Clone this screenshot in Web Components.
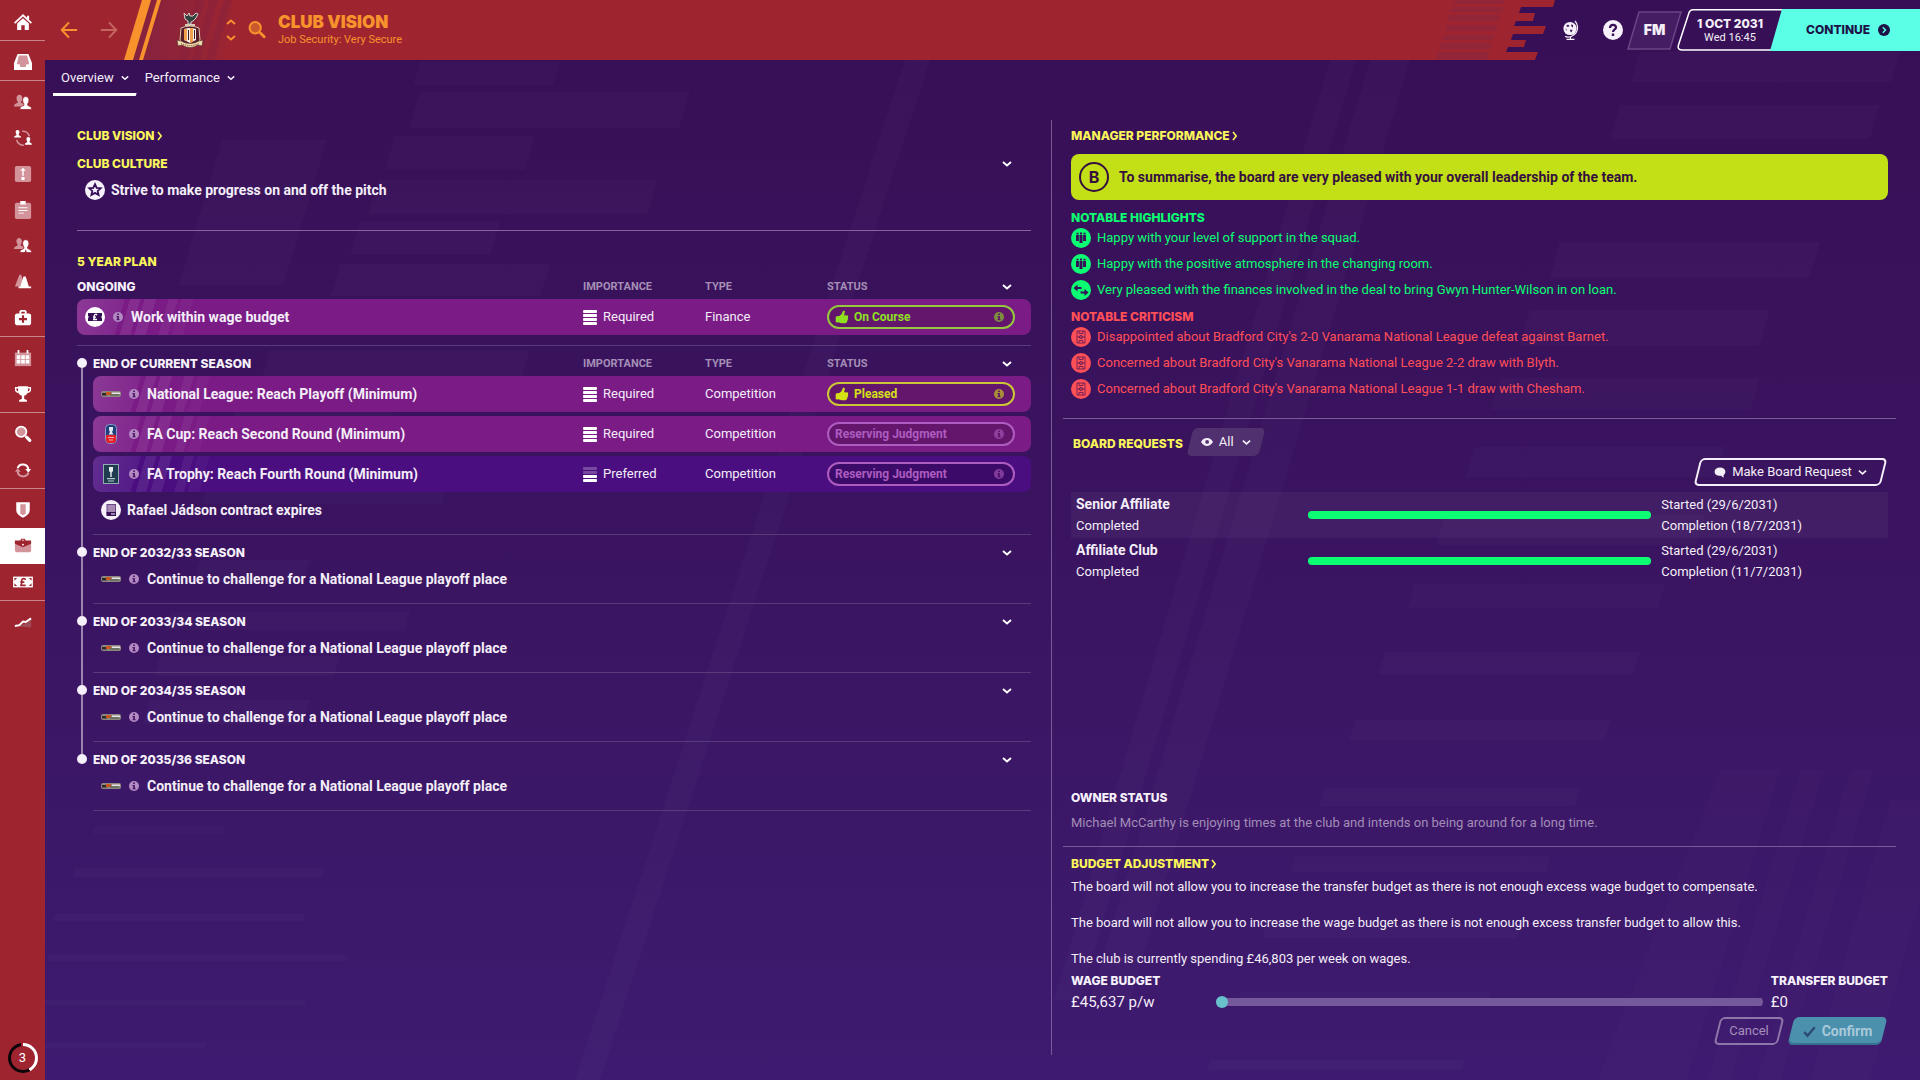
<!DOCTYPE html>
<html lang="en">
<head>
<meta charset="utf-8">
<title>Club Vision</title>
<style>
  html, body { height: 100%; margin: 0; }
  body {
    font: 13px/18px Roboto, "Liberation Sans", sans-serif;
    color: #f4eef8;
    background: #370f57;
    --head: Inter, "Liberation Sans", sans-serif;
    --yellow: #fbf659;
    --red: #9e2530;
    --amber: #f7922c;
    --good: #0cff72;
    --bad: #ff4f57;
    --cyan: #5affe6;
  }
</style>
</head>
<body>
<club-app></club-app>

<script>
const person = (x, y, s, fill, extra = '') =>
  `<path transform="translate(${x} ${y}) scale(${s})" fill="${fill}" ${extra} d="M6 0c2 0 3.200 1.500 3.200 3.700 0 1.600-.6 2.900-1.300 3.600v1.500c1 .8 4.100 1 4.100 4.200H0c0-3.200 3.100-3.400 4.100-4.200V7.300C3.400 6.600 2.800 5.300 2.800 3.700 2.800 1.500 4 0 6 0z"/>`;

const PALE = '#d3939a';

const ICONS = {
  home: `<path fill="#fff" d="M10 1 0 10.500l1.400 1.500L10 4l8.600 8 1.400-1.500-3.200-3V3h-2.300v2.300z"/><path fill="#fff" d="M10 5.800l6.500 6V19h-4.600v-5.500H8.100V19H3.500v-7.200z"/>`,
  inbox: `<path fill="#fff" d="M4 1h12l4 10v8H0v-8z"/><path fill="${PALE}" d="M5.400 2.800h9.200l2.400 9.700h-3.200L13 15.500H7l-.8-3H3z"/>`,
  squad: person(0, 2, 1, PALE) + person(6.5, 4, 1.100, '#fff', `stroke="#9e2530" stroke-width=".8"`),
  swap: person(0, 1, .66, '#fff') + person(12, 9, .66, '#fff') + `<path fill="none" stroke="${PALE}" stroke-width="1.800" d="M9 2.500a7.500 7.500 0 0 1 8 5.500M11 18a7.500 7.500 0 0 1-8-6"/>`,
  board: `<rect x="1" y="1" width="18" height="18" rx="2" fill="${PALE}"/><path fill="#fff" d="M10 3l3 3.500h-2.200V12H9.200V6.500H7z"/><circle cx="10" cy="15" r="2" fill="#fff"/>`,
  clip: `<rect x="1" y="2" width="18" height="18" rx="2" fill="${PALE}"/><path fill="#fff" d="M7 0h6v4H7zM5 7h10v1H5zM5 10h10v1H5zM5 13h6v1H5z"/>`,
  staff: person(0, 1, .95, PALE) + person(6.5, 3, 1.100, '#fff', `stroke="#9e2530" stroke-width=".8"`) + `<path fill="#9e2530" d="M13 13.500l-1.200 4h2.600z"/>`,
  cones: `<path fill="${PALE}" d="M6 2h2l4 13H1z"/><path fill="#fff" d="M10.500 4h2.500l3.500 11H19v2H5v-2h2z"/>`,
  medic: `<path fill="#fff" fill-rule="evenodd" d="M6 5V2.500L7.500 1h5L14 2.500V5h3L19 6.500v10L17.500 18h-15L1 16.500v-10L3 5zm2 0h4V3H8zm.8 2v3H5.600v2.400h3.200v3h2.400v-3h3.200V10h-3.200V7z"/>`,
  calendar: `<path fill="${PALE}" d="M1 4h18v15H1z"/><path fill="#fff" d="M4 1h2v4H4zM14 1h2v4h-2zM3 7h4v4H3zM8 7h4v4H8zM13 7h4v4h-4zM3 12h4v4H3zM8 12h4v4H8zM13 12h4v4h-4z"/>`,
  trophy: `<path fill="#fff" d="M4.500 1.500h11v5c0 3.500-2.200 5.100-4.200 5.500v3.500l3 1.300V18.500H5.700v-1.700l3-1.300V12C6.700 11.600 4.500 10 4.500 6.500z"/><path fill="none" stroke="#fff" stroke-width="1.500" d="M5 3H1.800v2c0 2 1.500 3 3.700 3M15 3h3.200v2c0 2-1.500 3-3.700 3"/>`,
  search: `<circle cx="8" cy="7.500" r="5.800" fill="${PALE}" stroke="#fff" stroke-width="2"/><path stroke="#fff" stroke-width="3.600" stroke-linecap="round" d="M14 13.500l3.500 3.500"/>`,
  cycle: `<path fill="none" stroke="#fff" stroke-width="2.200" d="M4 8a6.200 6.200 0 0 1 12 1.500"/><path fill="#fff" d="M12.500 9H19l-3 4z"/><path fill="none" stroke="${PALE}" stroke-width="2.200" d="M16 13A6.200 6.200 0 0 1 4 11.500"/><path fill="${PALE}" d="M7.500 12H1l3-4z"/>`,
  shield: `<path fill="#fff" d="M2.500 1.500h15v8.500c0 3.800-3.200 6.500-7.500 8.500-4.300-2-7.500-4.700-7.500-8.500z"/><path fill="${PALE}" d="M7 3.500h6v10c-.8.9-1.900 1.700-3 2.200-1.100-.5-2.200-1.300-3-2.200z"/>`,
  briefcase: `<path fill="${PALE}" d="M1 6h18v9.500L17.500 17h-15L1 15.500z"/><path fill="#9e2530" d="M1 4h6l1-2h4l1 2h6v3.500l-9 4-9-4zM8.500 4h3l-.5-1H9z"/><circle cx="10" cy="8.500" r="1" fill="#fff"/>`,
  money: `<path fill="#fff" d="M-1 4h22v12H-1z"/><path fill="#9e2530" d="M.5 5.500h3l-3 3zM19.500 5.500h-3l3 3zM.5 14.500h3l-3-3zM19.500 14.500h-3l3-3z"/><path fill="none" stroke="#9e2530" stroke-width="1.900" d="M12.800 7.500C12 5.500 8.500 5.800 8.500 8.500V11c0 1.500-.6 2.500-1.500 2.800h6M7 10.200h4.500"/>`,
  trend: `<path fill="#9f4a57" d="M5 15l8-4 6-3v8z"/><path fill="none" stroke="#fff" stroke-width="2.200" d="M1 14.500l5-1 4-4 3 .5 6-4"/>`,
  back: `<path fill="none" stroke="currentColor" stroke-width="2.300" d="M19 10H2M10 1.500L2 10l8 8.500"/>`,
  forward: `<path fill="none" stroke="currentColor" stroke-width="2.300" d="M1 10h17M10 1.500l8 8.500-8 8.500"/>`,
  up: `<path fill="none" stroke="currentColor" stroke-width="3.800" d="M2 14l8-7 8 7"/>`,
  down: `<path fill="none" stroke="currentColor" stroke-width="3.800" d="M2 6l8 7 8-7"/>`,
  right: `<path fill="none" stroke="currentColor" stroke-width="4" d="M5 0l8 10-8 10"/>`,
  find: `<circle cx="8" cy="7.500" r="6.300" fill="#c95a2d" stroke="currentColor" stroke-width="2.200"/><path stroke="currentColor" stroke-width="3.200" stroke-linecap="round" d="M14 13.500l4 4"/>`,
  star: `<circle cx="10" cy="10" r="10" fill="#f6f1fa"/><path fill="none" stroke="#370f57" stroke-width="1.800" d="M10 4.200l1.700 3.700 4 .4-3 2.700.9 4-3.600-2.100L6.400 15l.9-4-3-2.700 4-.4z"/>`,
  cash: `<circle cx="10" cy="10" r="10" fill="#fff"/><path fill="#370f57" d="M3 6h14v8H3z"/><path fill="#fff" d="M3 9v2l1-1zM17 9v2l-1-1z"/><path fill="none" stroke="#fff" stroke-width="1.300" d="M12 8.200C11.500 6.800 9.200 7 9.200 8.800v2c0 .9-.4 1.500-1.100 1.700H12M8 10.200h3"/>`,
  contract: `<circle cx="10" cy="10" r="10" fill="#f6f1fa"/><rect x="6" y="4.500" width="8.500" height="9" fill="#a78bb6" stroke="#6c4588"/><path fill="#370f57" d="M5.500 12H15v4H5.500z"/><path fill="#fff" d="M10 13.500h4v1h-4z"/>`,
  info: `<circle cx="10" cy="10" r="10" fill="currentColor"/><path fill="var(--hole, #4a1763)" d="M8.400 3h3.400v3H8.400zM7 8h4.800v6H13v2.400H7.200V14h1.200v-3.600H7z"/>`,
  thumb: `<path fill="currentColor" d="M1 9.500l3.500-.8V18L1 17.500zM5.500 9L9 6.500 11.500 1h2l.6 1.500L13 7.500l6 .2L18.500 10l.3 2.500-1 2.200-.5 2.300L15 19H9l-3.500-1.500z"/><path fill="currentColor" d="M3 9h5v8.500H3z"/>`,
  squadDot: `<circle cx="10" cy="10" r="10" fill="currentColor"/><path fill="#370f57" d="M5 7h2.900v6H5zM8.500 7h3v8h-3zM12.100 7H15v6h-2.900zM5.500 4.800h2v1.600h-2zM9 4.500h2v1.900H9zM12.500 4.800h2v1.600h-2z"/>`,
  arrowsDot: `<circle cx="10" cy="10" r="10" fill="currentColor"/><path fill="#370f57" d="M2.500 8l4-3.500V7h4v2h-4v2.500zM17.500 12.500l-4 3.500v-2.500h-4v-2h4V9z"/>`,
  pitchDot: `<circle cx="10" cy="10" r="10" fill="currentColor"/><path fill="none" stroke="#370f57" stroke-opacity=".65" d="M6 4h8v12H6zM6 10h8M8 4v2.500h4V4M8 16v-2.500h4V16"/><circle cx="10" cy="10" r="1.600" fill="none" stroke="#370f57" stroke-opacity=".65"/>`,
  eye: `<path fill="currentColor" fill-rule="evenodd" d="M0 10C3 5 6.500 3.500 10 3.500S17 5 20 10c-3 5-6.500 6.500-10 6.500S3 15 0 10zm7-.2a3.200 3.200 0 1 0 6.400 0A3.200 3.200 0 0 0 7 9.800z"/>`,
  bubble: `<path fill="currentColor" d="M10 2.500c5.500 0 9 2.800 9 7 0 2.200-1.300 4.200-3 5.500v4.500l-4.500-3.200C6 17 1 14 1 9.500c0-4.200 3.500-7 9-7z"/>`,
  tick: `<path fill="none" stroke="currentColor" stroke-width="3.600" d="M2 11l5 5.500L18 3.500"/>`,
  help: `<circle cx="10" cy="10" r="10" fill="#f6f1fa"/><path fill="none" stroke="#370f57" stroke-width="2.200" d="M7 8c0-4 6-4 6-.6 0 2-3 2-3 4.600"/><path fill="#370f57" d="M8.800 13.500h2.400V16H8.800z"/>`,
  globe: `<circle cx="9" cy="8.500" r="6.600" fill="#f6f1fa"/><path fill="#370f57" d="M5 6l2-1.500L8.500 6 7 7zM10 4.500l2 .5v2.500l-1.500-1zM9.500 9.500l2 .5-1.200 2.500-1.300-1.500zM4.500 8.500l1.200 1-.4 1.500z"/><path fill="none" stroke="#f6f1fa" stroke-width="1.200" d="M14 1a9.500 9.500 0 0 1-10 15.500M9.500 17v2M5.500 19.300h8"/>`,
  go: `<circle cx="10" cy="10" r="10" fill="#1d1147"/><path fill="none" stroke="#5affe6" stroke-width="2.400" d="M8 5.500l4.500 4.500L8 14.500"/>`,
  // competition logos
  league: `<rect x="0" y="7" width="20" height="6" rx="2" fill="#8d8781"/><path fill="#2f2a2e" d="M1 9h5v2.500H1z"/><path fill="#c9571f" d="M5 8h5v3H5z"/><path fill="#e6e2e4" d="M11 8.500h8v1.500h-8z"/><path fill="#4c5f45" d="M9 10.500h9v1H9z"/>`,
  facup: `<rect x="4.500" y=".5" width="11" height="19" rx="4" fill="#1d3f7c" stroke="#8b9cc4"/><path fill="#e5202a" d="M5 11h10v5q0 3-3 3H8q-3 0-3-3z"/><path fill="#dfe6f2" d="M8 3h4v3l-1 2 1.500 2.500h-5L9 8 8 6z"/><path fill="#f4a9a9" d="M7 13h6v1H7zM8 15.500h4v1H8z"/>`,
  fatrophy: `<rect x="2.500" y=".5" width="15" height="19" fill="#1f3c50" stroke="#93abb5"/><path fill="#e6edf0" d="M8 3h4v4l-1.300 1.500V13H9.300V8.500L8 7z"/><path fill="#b8c8cf" d="M6 14h8v1.200H6zM7 16.500h6v1H7z"/>`
};

class GameIcon extends HTMLElement {
  connectedCallback() {
    this.attachShadow({ mode: 'open' }).innerHTML = `
      <style>
        :host { display: inline-flex; flex: none; width: 20px; height: 20px; }
        svg { width: 100%; height: 100%; overflow: visible; }
      </style>
      <svg viewBox="0 0 20 20" aria-hidden="true">${ICONS[this.getAttribute('name')] || ''}</svg>`;
  }
}

class SideNav extends HTMLElement {
  connectedCallback() {
    const groups = [
      ['home'],
      ['inbox'],
      ['squad', 'swap', 'board', 'clip', 'staff', 'cones', 'medic'],
      ['calendar', 'trophy'],
      ['search', 'cycle'],
      ['shield', 'briefcase', 'money'],
      ['trend']
    ];
    this.attachShadow({ mode: 'open' }).innerHTML = `
      <style>
        :host { display: flex; flex-direction: column; width: 45px; background: var(--red); }
        ul { list-style: none; margin: 0; padding: 3px 0 0; border-bottom: 1px solid #c9838a; }
        ul:first-of-type { padding-top: 4px; }
        ul:last-of-type { border: 0; }
        a { display: flex; height: 36px; align-items: center; justify-content: center; }
        a.on { background: #fff; }
        game-icon { width: 18px; height: 18px; }
        .count { margin: auto auto 7px; width: 30px; height: 30px; border-radius: 50%; display: grid;
          background: conic-gradient(#fff 0 42%, #0b0408 42% 98%, var(--red) 98%); color: #fff; }
        .count span { margin: 3px; border-radius: 50%; background: var(--red); text-align: center; line-height: 24px; }
      </style>
      ${groups.map(g => `<ul>${g.map(n =>
        `<li><a href="#${n}" aria-label="${n}" class="${n === 'briefcase' ? 'on' : ''}"><game-icon name="${n}"></game-icon></a></li>`).join('')}</ul>`).join('')}
      <div class="count"><span>3</span></div>`;
  }
}

class ClubCrest extends HTMLElement {
  connectedCallback() {
    this.attachShadow({ mode: 'open' }).innerHTML = `
      <style>:host { display: block; width: 28px; height: 38px; } svg { display: block; }</style>
      <svg width="28" height="38" viewBox="0 0 28 38" aria-hidden="true">
        <path fill="#33413f" stroke="#d8cfc8" d="M8 2l3 3 2-3 1 3h3l3-3 2 1-2 4-3 3-2 1v2h-3v-3l-3-2z"/>
        <path fill="#d8cbb8" d="M9 13h10v2H9z"/>
        <path fill="#5a1f2d" stroke="#d9c7a5" d="M5 17q9-4 18 0l1 12q-3 5-10 7-7-2-10-7z"/>
        <path fill="#f3eee6" d="M8 18q6-2 12 0v11l-6 3-6-3z"/>
        <path fill="#f0a04a" d="M8 18h3v12l-3-1zM14 17h3v14l-3 1z"/>
        <path fill="#3a1a25" d="M12 19h1v10h-1zM18 19h1v9h-1z"/>
        <path fill="#efdcae" stroke="#4b2a22" stroke-width=".6" d="M1 29l4 1q9 5 18 0l4-1-1 6-4-1q-8 5-16 0l-4 1z"/>
        <path fill="none" stroke="#7b3a30" stroke-dasharray="1 1" d="M5 32.500q9 4 18 0"/>
      </svg>`;
  }
}

/* Slanted box behind slotted content */
class SkewButton extends HTMLElement {
  connectedCallback() {
    this.attachShadow({ mode: 'open' }).innerHTML = `
      <style>
        :host { display: inline-flex; }
        button { all: unset; box-sizing: border-box; position: relative; display: flex; justify-content: center;
          height: 28px; width: 100%; white-space: nowrap; color: var(--ink, #f4eef8); }
        button::before { content: ""; position: absolute; inset: 0 4px; transform: skewX(-14deg); box-sizing: border-box;
          border-radius: 5px; background: var(--fill, none); border: var(--line, 0); box-shadow: var(--edge, none); }
        .in { position: relative; display: flex; align-items: center; gap: 6px; }
      </style>
      <button type="button"><span class="in"><slot></slot></span></button>`;
  }
}

class TopBar extends HTMLElement {
  connectedCallback() {
    this.attachShadow({ mode: 'open' }).innerHTML = `
      <style>
        :host { display: flex; height: 60px; }
        .red { flex: 1; display: flex; align-items: center; background: var(--red); overflow: hidden; color: var(--amber); }
        button { all: unset; display: grid; }
        .nav { display: flex; gap: 22px; padding: 0 6px 0 15px; }
        .nav game-icon { width: 18px; height: 18px; }
        .fwd { color: #c4655f; }
        .stripes { display: block; flex: none; margin-right: -64px; }
        .spin { display: grid; gap: 6px; margin: 0 12px 0 22px; }
        .spin game-icon { width: 10px; height: 10px; }
        .find game-icon { width: 18px; height: 18px; }
        h1 { margin: 0; font: 900 17px/20px var(--head); }
        .sub { font-size: 11px; line-height: 16px; }
        .names { margin-left: 12px; }
        .flag { display: block; flex: none; }
        .right { display: flex; align-items: center; height: 60px; }
        .tools { display: flex; align-items: center; gap: 22px; padding-left: 6px; }
        .fm { place-items: center; margin-left: -18px; width: 55px; height: 39px; font: 900 14px/18px var(--head); }
        .fm svg, .fm span { grid-area: 1 / 1; }
        .date { display: grid; place-items: center; margin-left: -5px; width: 106px; height: 42px; text-align: center; }
        .date svg, .date div { grid-area: 1 / 1; }
        .date b { display: block; font: 800 12px/14px var(--head); }
        .date span { display: block; font-size: 11px; line-height: 13px; }
        .go { box-sizing: border-box; display: flex; align-items: center; gap: 8px; width: 150px; height: 42px; margin-left: -13px; padding-left: 36px;
          background: var(--cyan); color: #1d1147; font: 800 12px/16px var(--head); clip-path: polygon(12px 0, 100% 0, 100% 100%, 0 100%); }
        .go game-icon { width: 12px; height: 12px; }
      </style>
      <div class="red">
        <div class="nav">
          <button aria-label="Back"><game-icon name="back"></game-icon></button>
          <button class="fwd" aria-label="Forward"><game-icon name="forward"></game-icon></button>
        </div>
        <svg class="stripes" width="116" height="60" viewBox="0 0 116 60" aria-hidden="true">
          <defs><linearGradient id="g"><stop offset="0" stop-color="#7a2145" stop-opacity=".75"/><stop offset="1" stop-color="#7a2145" stop-opacity="0"/></linearGradient></defs>
          <path fill="url(#g)" d="M20 0h96L98 60H2z"/>
          <path fill="#84213f" fill-opacity=".45" d="M72 0h9L63 60h-9zM86 0h8L76 60h-8zM100 0h8L90 60h-8z"/>
          <path fill="#f7922c" d="M18 0h9L9 60H0zM33 0h4L19 60h-4z"/>
        </svg>
        <club-crest></club-crest>
        <div class="spin">
          <button aria-label="Previous"><game-icon name="up"></game-icon></button>
          <button aria-label="Next"><game-icon name="down"></game-icon></button>
        </div>
        <button class="find" aria-label="Search"><game-icon name="find"></game-icon></button>
        <div class="names">
          <h1>CLUB VISION</h1>
          <div class="sub">Job Security: Very Secure</div>
        </div>
      </div>
      <svg class="flag" width="119" height="60" viewBox="0 0 119 60" aria-hidden="true">
        <path fill="#9e2530" d="M0 0h119l-2 7H85l-2 6h16l-2 8H80l-2 5h32l-3 8H77l-2 6h15l-2 7H72l-2 5h32l-3 8H0z"/>
        <path fill="#932538" d="M19 0h50l-1 4H17zM16 7h51l-1 5H14zM13 15h51l-1 6H11zM11 25h51l-2 6H9zM8 35h50l-1 5H6zM5 43h51l-2 6H3zM2 52h51l-2 8H0z"/>
      </svg>
      <div class="right">
        <div class="tools">
          <button aria-label="World"><game-icon name="globe"></game-icon></button>
          <button aria-label="Help"><game-icon name="help"></game-icon></button>
          <button class="fm">
            <svg width="55" height="39" viewBox="0 0 55 39" aria-hidden="true"><path fill="#441d63" stroke="#6a4585" stroke-width="1.500" d="M12 1h42L43 38H1z"/></svg>
            <span>FM</span>
          </button>
        </div>
        <div class="date">
          <svg width="106" height="42" viewBox="0 0 106 42" aria-hidden="true"><path fill="none" stroke="#fff" stroke-width="1.500" d="M106 .8H16q-3 0-4 3L1.500 36q-1.500 5 4 5H94"/></svg>
          <div><b>1 OCT 2031</b><span>Wed 16:45</span></div>
        </div>
        <button class="go">CONTINUE <game-icon name="go"></game-icon></button>
      </div>`;
  }
}

class TabBar extends HTMLElement {
  connectedCallback() {
    this.attachShadow({ mode: 'open' }).innerHTML = `
      <style>
        :host { display: flex; height: 36px; padding-left: 8px; }
        a { display: flex; align-items: center; gap: 7px; padding: 0 8px; color: #f4eef8; text-decoration: none; }
        a.on { background: linear-gradient(#fff, #fff) bottom / 100% 3px no-repeat; clip-path: polygon(0 0, 100% 0, 100% 33px, calc(100% - 1px) 100%, 0 100%); }
        game-icon { width: 8px; height: 8px; }
      </style>
      <a href="#overview" class="on">Overview <game-icon name="down"></game-icon></a>
      <a href="#performance">Performance <game-icon name="down"></game-icon></a>`;
  }
}

class PanelHeading extends HTMLElement {
  connectedCallback() {
    const href = this.getAttribute('href');
    const arrow = '<game-icon name="right"></game-icon>';
    this.attachShadow({ mode: 'open' }).innerHTML = `
      <style>
        :host { display: flex; align-items: center; font: 800 12px/14px var(--head); color: var(--yellow); }
        a { display: flex; align-items: center; gap: 1px; color: inherit; text-decoration: none; }
        h2 { margin: 0; font: inherit; }
        game-icon { width: 8px; height: 8px; }
      </style>
      <h2>${href ? `<a href="${href}"><slot></slot>${arrow}</a>` : '<slot></slot>'}</h2>`;
  }
}

class StatusPill extends HTMLElement {
  connectedCallback() {
    const thumb = this.hasAttribute('thumb') ? '<game-icon name="thumb"></game-icon>' : '';
    this.attachShadow({ mode: 'open' }).innerHTML = `
      <style>
        :host { box-sizing: border-box; display: flex; align-items: center; gap: 5px; height: 24px; width: 188px; padding: 0 9px 0 6px;
          border: 2px solid; border-radius: 12px; background: #0000002e; color: #ae5cc0; font-weight: 700; font-size: 12px; line-height: 16px; }
        :host([tone="good"]) { color: #8ee01f; border-color: #95c83c; }
        :host([tone="ok"]) { color: #d5e016; border-color: #c9c736; }
        game-icon { width: 14px; height: 14px; }
        .i { width: 10px; height: 10px; margin-left: auto; opacity: .6; --hole: #5c1466; }
      </style>
      ${thumb}<slot></slot><game-icon class="i" name="info"></game-icon>`;
  }
}

/* One period of the plan: header line, rows and, on the timeline, a dot with a rail */
class PlanSection extends HTMLElement {
  connectedCallback() {
    const rows = JSON.parse(this.getAttribute('rows'));
    const cols = this.hasAttribute('cols');
    this.attachShadow({ mode: 'open' }).innerHTML = `
      <style>
        :host { display: flex; gap: 6px; padding-top: 6px; }
        .rail { display: flex; flex: none; flex-direction: column; align-items: center; width: 10px; margin: 6px 0 -12px; }
        .rail i { width: 10px; height: 10px; border-radius: 50%; background: #f6f1fa; }
        .rail b { flex: 1; width: 2px; background: #9c85b0; }
        :host([last]) .rail b { display: none; }
        table, tbody, thead { display: grid; }
        table { flex: 1; min-width: 0; padding-bottom: 10px; border-bottom: 1px solid #5b3a7b; }
        :host([culture]) table { padding-bottom: 26px; border-color: #8563a0; }
        tbody { gap: 4px; }
        tr { display: grid; grid-template-columns: 1fr 122px 122px 204px; align-items: center; height: 28px; }
        thead tr { height: 24px; }
        th { font-size: 11px; line-height: 14px; font-weight: 700; color: #a58fb6; text-align: left; padding: 0; }
        thead th:first-child { font: 800 12px/14px var(--head); color: #f6f1fa; }
        :host([culture]) th:first-child { color: var(--yellow); }
        th:last-child { display: flex; align-items: center; justify-content: space-between; padding-right: 19px; }
        th button { all: unset; display: grid; margin-left: auto; color: #fff; }
        th game-icon { width: 10px; height: 10px; }
        td { display: flex; align-items: center; padding: 0; }
        td:first-child { gap: 8px; padding-left: 8px; font-weight: 700; font-size: 14px; height: 100%; }
        .wide td:first-child { grid-column: 1 / -1; }
        .short td:first-child { gap: 6px; }
        .bar { height: 36px; border-radius: 8px; background: #7a1b86; overflow: hidden; }
        .bar.low { background: #4a0e80; }
        .bar td:first-child {
          background:
            linear-gradient(106deg, #0000 51px, #ffffff14 51px 61px, #0000 61px 65px, #ffffff12 65px 76px, #0000 76px 88px, #ffffff0e 88px 97px, #0000 97px 101px, #ffffff08 101px 112px, #0000 112px),
            linear-gradient(106deg, #ffffff22 0, #ffffff0f 46px, #0000 46px);
        }
        .level { display: grid; gap: 1px; width: 14px; margin-right: 6px; }
        .level i { height: 3px; border-radius: 1px; background: #fff; }
        .level.two i:nth-child(-n+2) { opacity: .25; }
        .info { width: 10px; height: 10px; color: #b48ac4; }
      </style>
      ${this.hasAttribute('timeline') ? '<div class="rail"><i></i><b></b></div>' : ''}
      <table>
        <thead><tr>
          <th scope="col">${this.getAttribute('heading')}</th>
          ${cols ? '<th scope="col">IMPORTANCE</th><th scope="col">TYPE</th>' : '<td></td><td></td>'}
          <th scope="col">${cols ? 'STATUS' : ''}<button type="button" aria-label="Collapse"><game-icon name="down"></game-icon></button></th>
        </tr></thead>
        <tbody>${rows.map(r => this.row(r)).join('')}</tbody>
      </table>`;
  }

  row([icon, text, level, type, status, tone]) {
    const short = icon === 'star' || icon === 'contract';
    const info = short ? '' : '<game-icon class="info" name="info"></game-icon>';
    const first = `<td><game-icon name="${icon}"></game-icon>${info}<span>${text}</span></td>`;
    if (!level) return `<tr class="wide ${short ? 'short' : ''}">${first}</tr>`;
    const low = level === 'Preferred';
    return `<tr class="bar ${low ? 'low' : ''}">${first}
      <td><span class="level ${low ? 'two' : ''}"><i></i><i></i><i></i><i></i></span>${level}</td>
      <td>${type}</td>
      <td><status-pill ${tone ? `tone="${tone}" thumb` : ''}>${status}</status-pill></td></tr>`;
  }
}

class PlanPane extends HTMLElement {
  connectedCallback() {
    const seasons = ['2032/33', '2033/34', '2034/35', '2035/36'];
    const attr = rows => JSON.stringify(rows).replace(/"/g, '&quot;');
    this.attachShadow({ mode: 'open' }).innerHTML = `
      <style>
        :host { display: block; padding: 4px 20px 0 32px; }
        panel-heading { height: 24px; }
        .five { height: 26px; margin-top: 18px; }
        .flush { padding-top: 0; }
        .culture { padding-top: 4px; }
      </style>
      <panel-heading href="#vision">CLUB VISION</panel-heading>
      <plan-section culture class="culture" heading="CLUB CULTURE"
        rows="${attr([['star', 'Strive to make progress on and off the pitch']])}"></plan-section>
      <panel-heading class="five">5 YEAR PLAN</panel-heading>
      <plan-section cols class="flush" heading="ONGOING"
        rows="${attr([['cash', 'Work within wage budget', 'Required', 'Finance', 'On Course', 'good']])}"></plan-section>
      <plan-section cols timeline heading="END OF CURRENT SEASON" rows="${attr([
        ['league', 'National League: Reach Playoff (Minimum)', 'Required', 'Competition', 'Pleased', 'ok'],
        ['facup', 'FA Cup: Reach Second Round (Minimum)', 'Required', 'Competition', 'Reserving Judgment'],
        ['fatrophy', 'FA Trophy: Reach Fourth Round (Minimum)', 'Preferred', 'Competition', 'Reserving Judgment'],
        ['contract', 'Rafael Jádson contract expires']
      ])}"></plan-section>
      ${seasons.map((s, i) => `<plan-section timeline ${i === seasons.length - 1 ? 'last' : ''} heading="END OF ${s} SEASON"
        rows="${attr([['league', 'Continue to challenge for a National League playoff place']])}"></plan-section>`).join('')}`;
  }
}

class NoteItem extends HTMLElement {
  connectedCallback() {
    this.attachShadow({ mode: 'open' }).innerHTML = `
      <style>:host { display: flex; align-items: center; gap: 6px; height: 26px; }</style>
      <game-icon name="${this.getAttribute('icon')}"></game-icon><span><slot></slot></span>`;
  }
}

class BoardPane extends HTMLElement {
  connectedCallback() {
    const requests = [
      ['Senior Affiliate', '29/6/2031', '18/7/2031'],
      ['Affiliate Club', '29/6/2031', '11/7/2031']
    ];
    this.attachShadow({ mode: 'open' }).innerHTML = `
      <style>
        :host { display: flex; flex-direction: column; padding: 4px 32px 10px 19px; border-left: 1px solid #7b5a95; }
        .top { height: 24px; }
        .banner { display: flex; align-items: center; gap: 10px; height: 46px; margin: 6px 0 4px; padding-left: 8px; border-radius: 8px;
          background: #c3df15; color: #35103f; font-weight: 700; font-size: 14px; }
        .grade { box-sizing: border-box; width: 30px; height: 30px; border: 2px solid #35103f; border-radius: 50%; text-align: center; font: 700 16px/26px var(--head); }
        .good { color: var(--good); }
        .bad { color: var(--bad); margin-bottom: 16px; }
        .good panel-heading, .bad panel-heading { color: inherit; height: 14px; margin-top: 7px; }
        hr { align-self: stretch; box-sizing: border-box; height: 1px; margin: 0 -8px; border: 0; background: #7b5a95; }
        .reqhead { display: flex; align-items: center; gap: 4px; height: 28px; margin-top: 9px; padding-left: 2px; }
        .reqhead panel-heading { padding-top: 4px; }
        label.filter { position: relative; display: flex; align-items: center; gap: 6px; height: 28px; padding: 0 14px; }
        label.filter::before { content: ""; position: absolute; inset: 0 3px; border-radius: 5px; background: #51306f; transform: skewX(-14deg); }
        label.filter > * { position: relative; }
        select { all: unset; appearance: none; width: 17px; font-size: 13px; line-height: 18px; color: #f4eef8; }
        label.filter game-icon { width: 12px; height: 12px; }
        label.filter .v { width: 9px; height: 9px; }
        .make { align-self: flex-end; width: 195px; margin: 2px 0 6px; font-size: 13px; --line: 2px solid #f4eef8; }
        .make game-icon { width: 12px; height: 12px; } .make .v { width: 9px; height: 9px; }
        table { width: 100%; border-collapse: collapse; table-layout: fixed; }
        td { height: 46px; padding: 0; vertical-align: middle; line-height: 21px; }
        td:first-child { width: 29%; padding-left: 5px; box-sizing: border-box; }
        td:last-child { width: 28%; padding-left: 2px; box-sizing: border-box; }
        td:nth-child(2) { padding-right: 8px; }
        td b { font-size: 14px; }
        tr:nth-child(odd) { background: #ffffff0b; }
        progress { appearance: none; display: block; width: 100%; height: 8px; border: 0; }
        progress::-webkit-progress-bar { background: #ffffff20; border-radius: 4px; }
        progress::-webkit-progress-value { background: var(--good); border-radius: 4px; }
        .owner { margin-top: auto; }
        .owner panel-heading { height: 20px; color: #f6f1fa; }
        p { margin: 0 0 18px; }
        .owner p { margin: 6px 0 14px; color: #a28db7; }
        .budget { height: 20px; margin: 7px 0 4px; }
        p.tight { margin-bottom: 4px; }
        .adjust { display: grid; grid-template-columns: 145px 1fr auto; row-gap: 2px; align-items: center; }
        .adjust span { line-height: 20px; font-size: 15px; }
        .adjust .t { padding-left: 8px; }
        .adjust label { font: 800 12px/18px var(--head); color: #f6f1fa; }
        input { appearance: none; width: 100%; height: 12px; margin: 0; background: linear-gradient(#76599a, #76599a) center / 100% 8px no-repeat; border-radius: 6px; }
        input::-webkit-slider-thumb { appearance: none; width: 12px; height: 12px; border-radius: 50%; background: #67c0cb; }
        .end { display: flex; justify-content: flex-end; gap: 2px; margin-top: 5px; }
        .cancel { width: 72px; --line: 2px solid #8f76a8; --ink: #a78fbb; }
        .ok { width: 101px; --fill: #4b90ad; --edge: inset 0 -2px 0 #35708f; --ink: #a9c9da; font-weight: 700; font-size: 14px; }
        .ok game-icon { width: 13px; height: 13px; color: #2c4a72; }
      </style>
      <panel-heading class="top" href="#manager">MANAGER PERFORMANCE</panel-heading>
      <div class="banner"><span class="grade">B</span>To summarise, the board are very pleased with your overall leadership of the team.</div>
      <section class="good">
        <panel-heading>NOTABLE HIGHLIGHTS</panel-heading>
        <note-item icon="squadDot">Happy with your level of support in the squad.</note-item>
        <note-item icon="squadDot">Happy with the positive atmosphere in the changing room.</note-item>
        <note-item icon="arrowsDot">Very pleased with the finances involved in the deal to bring Gwyn Hunter-Wilson in on loan.</note-item>
      </section>
      <section class="bad">
        <panel-heading>NOTABLE CRITICISM</panel-heading>
        <note-item icon="pitchDot">Disappointed about Bradford City's 2-0 Vanarama National League defeat against Barnet.</note-item>
        <note-item icon="pitchDot">Concerned about Bradford City's Vanarama National League 2-2 draw with Blyth.</note-item>
        <note-item icon="pitchDot">Concerned about Bradford City's Vanarama National League 1-1 draw with Chesham.</note-item>
      </section>
      <hr>
      <div class="reqhead">
        <panel-heading>BOARD REQUESTS</panel-heading>
        <label class="filter"><game-icon name="eye"></game-icon><select aria-label="Filter requests"><option>All</option></select><game-icon class="v" name="down"></game-icon></label>
      </div>
      <skew-button class="make"><game-icon name="bubble"></game-icon><span>Make Board Request</span><game-icon class="v" name="down"></game-icon></skew-button>
      <table>
        ${requests.map(([name, from, to]) => `<tr>
          <td><b>${name}</b><br>Completed</td>
          <td><progress value="1" max="1" aria-label="${name}"></progress></td>
          <td>Started (${from})<br>Completion (${to})</td></tr>`).join('')}
      </table>
      <section class="owner">
        <panel-heading>OWNER STATUS</panel-heading>
        <p>Michael McCarthy is enjoying times at the club and intends on being around for a long time.</p>
      </section>
      <hr>
      <panel-heading class="budget" href="#budget">BUDGET ADJUSTMENT</panel-heading>
      <p>The board will not allow you to increase the transfer budget as there is not enough excess wage budget to compensate.</p>
      <p>The board will not allow you to increase the wage budget as there is not enough excess transfer budget to allow this.</p>
      <p class="tight">The club is currently spending £46,803 per week on wages.</p>
      <div class="adjust">
        <label for="split">WAGE BUDGET</label><i></i><label class="t" for="split">TRANSFER BUDGET</label>
        <span>£45,637 p/w</span><input id="split" type="range" value="0" min="0" max="100"><span class="t">£0</span>
      </div>
      <div class="end">
        <skew-button class="cancel"><span>Cancel</span></skew-button>
        <skew-button class="ok"><game-icon name="tick"></game-icon><span>Confirm</span></skew-button>
      </div>`;
  }
}

/* Faint slanted bands behind the whole page */
class BackDrop extends HTMLElement {
  connectedCallback() {
    let bands = '';
    const add = (x, y, w, h) => { bands += `<path d="M${x} ${y}h${w}l-${h * .3} ${h}h-${w}z"/>`; };
    [[420, 62, 140, 23], [420, 92, 270, 36], [395, 136, 140, 34], [378, 180, 280, 34], [360, 222, 140, 32], [340, 264, 210, 32],
     [222, 140, 105, 145], [270, 350, 260, 30], [240, 392, 160, 30], [210, 478, 240, 26], [200, 560, 110, 22], [170, 612, 240, 18], [160, 656, 180, 20], [150, 700, 160, 24],
     [1640, 52, 260, 30], [1620, 105, 260, 34], [1590, 160, 180, 34], [1560, 242, 260, 36], [1530, 310, 240, 36], [1500, 378, 260, 32],
     [1475, 447, 250, 30], [1445, 515, 260, 30], [1415, 584, 250, 24], [1385, 652, 255, 22], [1355, 720, 255, 20], [1325, 788, 255, 18],
     [1296, 856, 255, 16], [1266, 924, 255, 14], [1240, 992, 250, 12], [1210, 1060, 255, 10],
     [95, 826, 130, 8], [75, 868, 250, 9], [55, 914, 250, 7], [48, 955, 300, 6], [46, 1000, 260, 5], [46, 1043, 160, 5]].forEach(b => add(...b));
    this.attachShadow({ mode: 'open' }).innerHTML = `
      <style>
        :host { position: absolute; inset: 0; overflow: hidden; background: linear-gradient(#370f56, #3a1460 50%, #3e1b70); }
        svg { display: block; width: 100%; height: 100%; }
      </style>
      <svg viewBox="0 0 1920 1080" preserveAspectRatio="xMidYMid slice" aria-hidden="true">
        <g fill="#fff" fill-opacity=".018">${bands}
          <path d="M905 60h25L600 1080h-25zM1330 60h26L1080 1000h-26zM1370 60h40L1130 1000h-40z"/>
          <path fill-opacity=".01" d="M1720 770h60l-93 310h-90zM1800 770h24l-93 310h-24zM1850 770h24l-93 310h-24zM1890 800h30v100l-50 180h-60z"/>
        </g>
      </svg>`;
  }
}

class ClubApp extends HTMLElement {
  connectedCallback() {
    this.attachShadow({ mode: 'open' }).innerHTML = `
      <style>
        :host { position: relative; display: grid; grid-template-columns: 45px 1fr; min-height: 100vh; }
        side-nav, .page { position: relative; }
        .page { display: flex; flex-direction: column; min-width: 0; }
        main { flex: 1; display: grid; grid-template-columns: 1006fr 869fr; padding: 24px 0 25px; }
      </style>
      <back-drop></back-drop>
      <side-nav></side-nav>
      <div class="page">
        <top-bar></top-bar>
        <tab-bar></tab-bar>
        <main>
          <plan-pane></plan-pane>
          <board-pane></board-pane>
        </main>
      </div>`;
  }
}

customElements.define('game-icon', GameIcon);
customElements.define('side-nav', SideNav);
customElements.define('club-crest', ClubCrest);
customElements.define('skew-button', SkewButton);
customElements.define('top-bar', TopBar);
customElements.define('tab-bar', TabBar);
customElements.define('panel-heading', PanelHeading);
customElements.define('status-pill', StatusPill);
customElements.define('plan-section', PlanSection);
customElements.define('plan-pane', PlanPane);
customElements.define('note-item', NoteItem);
customElements.define('board-pane', BoardPane);
customElements.define('back-drop', BackDrop);
customElements.define('club-app', ClubApp);
</script>
</body>
</html>
